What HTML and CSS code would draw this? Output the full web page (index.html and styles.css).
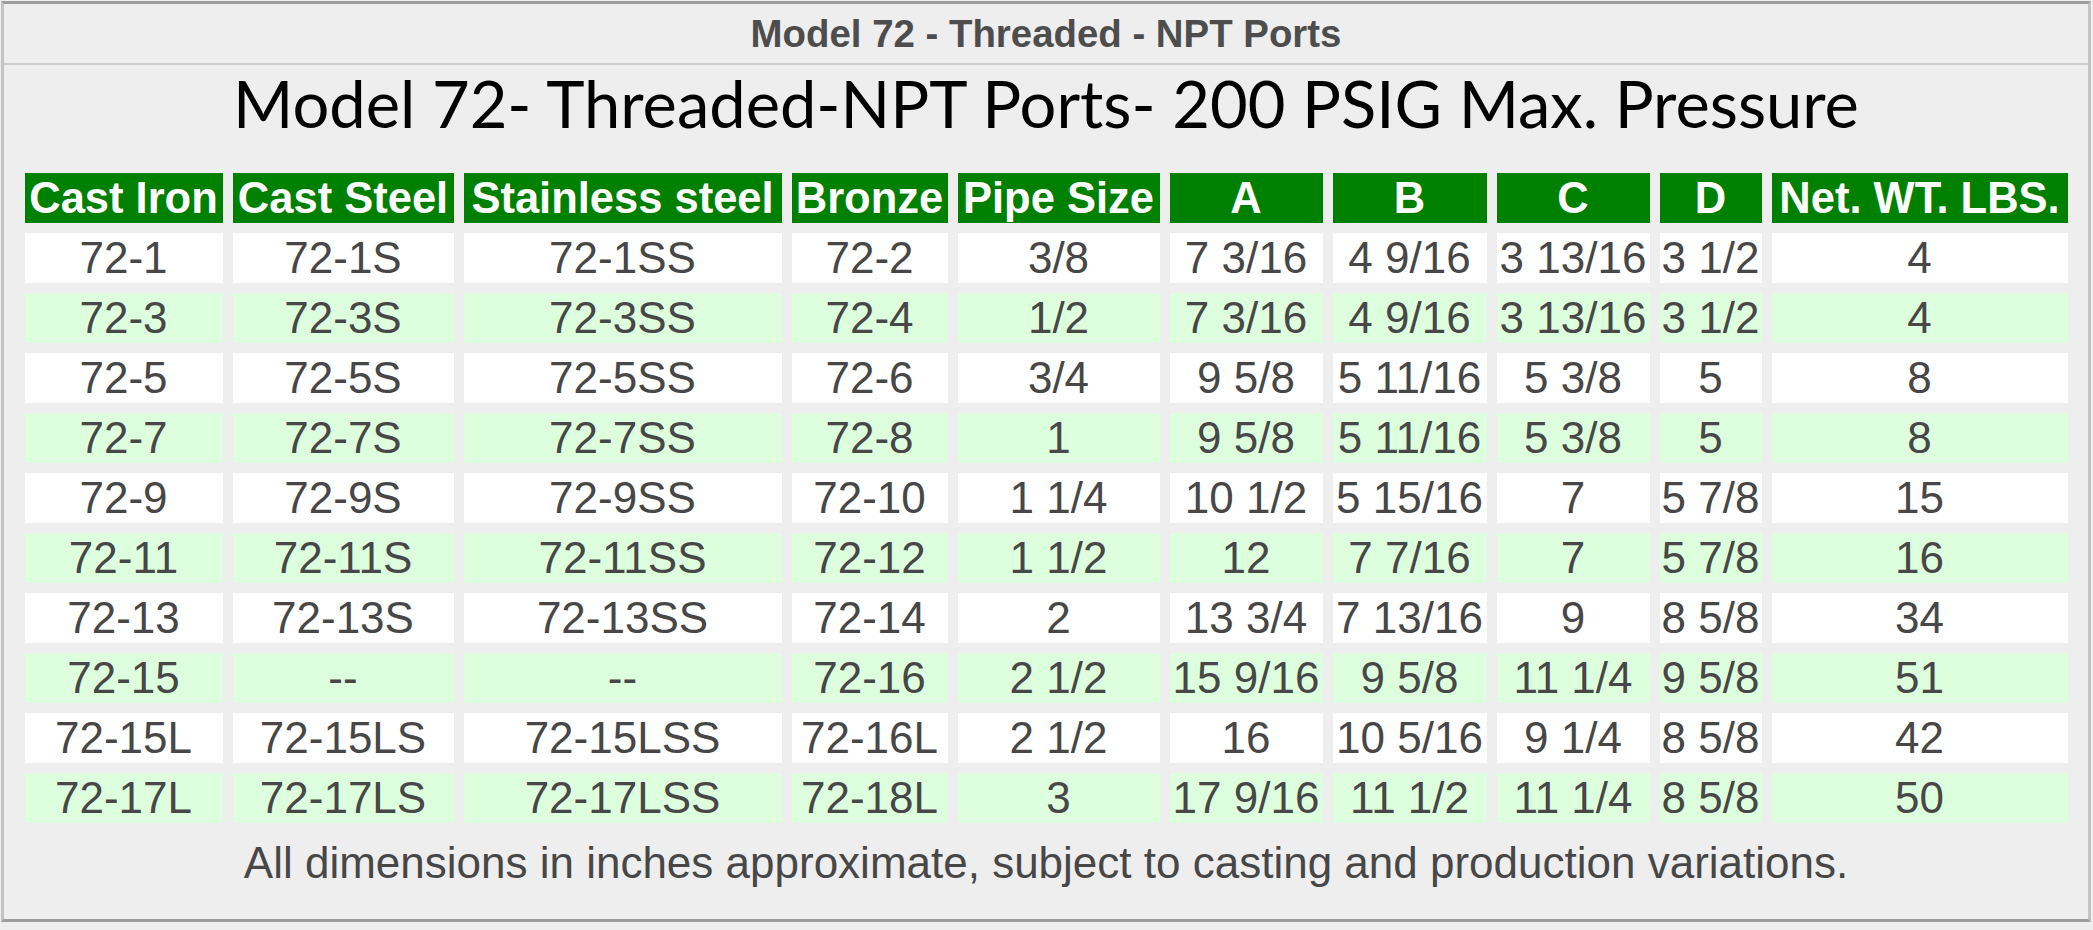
FILE: index.html
```html
<!DOCTYPE html>
<html>
<head>
<meta charset="utf-8">
<link rel="stylesheet" href="styles.css">
</head>
<body>
<div class="panel">
  <div class="panel-head">Model 72 - Threaded - NPT Ports</div>
  <h1 class="title">Model 72- Threaded-NPT Ports- 200 PSIG Max. Pressure</h1>
  <table class="spec">
    <colgroup>
      <col class="c-iron"><col class="c-steel"><col class="c-ss"><col class="c-bronze"><col class="c-pipe">
      <col class="c-a"><col class="c-b"><col class="c-c"><col class="c-d"><col class="c-wt">
    </colgroup>
    <thead>
      <tr><th>Cast Iron</th><th>Cast Steel</th><th>Stainless steel</th><th>Bronze</th><th>Pipe Size</th><th>A</th><th>B</th><th>C</th><th>D</th><th>Net. WT. LBS.</th></tr>
    </thead>
    <tbody>
      <tr><td>72-1</td><td>72-1S</td><td>72-1SS</td><td>72-2</td><td>3/8</td><td>7 3/16</td><td>4 9/16</td><td>3 13/16</td><td>3 1/2</td><td>4</td></tr>
      <tr><td>72-3</td><td>72-3S</td><td>72-3SS</td><td>72-4</td><td>1/2</td><td>7 3/16</td><td>4 9/16</td><td>3 13/16</td><td>3 1/2</td><td>4</td></tr>
      <tr><td>72-5</td><td>72-5S</td><td>72-5SS</td><td>72-6</td><td>3/4</td><td>9 5/8</td><td>5 11/16</td><td>5 3/8</td><td>5</td><td>8</td></tr>
      <tr><td>72-7</td><td>72-7S</td><td>72-7SS</td><td>72-8</td><td>1</td><td>9 5/8</td><td>5 11/16</td><td>5 3/8</td><td>5</td><td>8</td></tr>
      <tr><td>72-9</td><td>72-9S</td><td>72-9SS</td><td>72-10</td><td>1 1/4</td><td>10 1/2</td><td>5 15/16</td><td>7</td><td>5 7/8</td><td>15</td></tr>
      <tr><td>72-11</td><td>72-11S</td><td>72-11SS</td><td>72-12</td><td>1 1/2</td><td>12</td><td>7 7/16</td><td>7</td><td>5 7/8</td><td>16</td></tr>
      <tr><td>72-13</td><td>72-13S</td><td>72-13SS</td><td>72-14</td><td>2</td><td>13 3/4</td><td>7 13/16</td><td>9</td><td>8 5/8</td><td>34</td></tr>
      <tr><td>72-15</td><td>--</td><td>--</td><td>72-16</td><td>2 1/2</td><td>15 9/16</td><td>9 5/8</td><td>11 1/4</td><td>9 5/8</td><td>51</td></tr>
      <tr><td>72-15L</td><td>72-15LS</td><td>72-15LSS</td><td>72-16L</td><td>2 1/2</td><td>16</td><td>10 5/16</td><td>9 1/4</td><td>8 5/8</td><td>42</td></tr>
      <tr><td>72-17L</td><td>72-17LS</td><td>72-17LSS</td><td>72-18L</td><td>3</td><td>17 9/16</td><td>11 1/2</td><td>11 1/4</td><td>8 5/8</td><td>50</td></tr>
    </tbody>
  </table>
  <p class="note">All dimensions in inches approximate, subject to casting and production variations.</p>
</div>
</body>
</html>
```
FILE: styles.css
```css
html, body {
  margin: 0;
  padding: 0;
  background: #eeeeee;
}
body {
  padding: 1px 2px 2px 1px;
}
.panel {
  background: #eeeeee;
  border: 3px solid #c4c4c4;
  border-top-color: #9c9c9c;
  border-bottom-color: #9c9c9c;
  height: 921px;
  box-sizing: border-box;
  font-family: "Liberation Sans", Arial, sans-serif;
}
.panel-head {
  height: 59px;
  line-height: 59px;
  text-align: center;
  font-weight: bold;
  font-size: 38.4px;
  color: #4d4d4d;
  border-bottom: 2px solid #cccccc;
}
.title {
  margin: 6px 0 27px;
  font-family: Lato, "Open Sans", sans-serif;
  font-weight: normal;
  font-size: 65px;
  line-height: 65px;
  color: #000;
  text-align: center;
}
.spec {
  margin: 0 auto;
  border-collapse: separate;
  border-spacing: 10px;
  table-layout: fixed;
  width: 2063px;
}
.c-iron { width: 198px; }
.c-steel { width: 221px; }
.c-ss { width: 318px; }
.c-bronze { width: 156px; }
.c-pipe { width: 202px; }
.c-a { width: 153px; }
.c-b { width: 154px; }
.c-c { width: 153px; }
.c-d { width: 102px; }
.c-wt { width: 296px; }
.spec th, .spec td {
  padding: 0;
  text-align: center;
  white-space: nowrap;
  overflow: visible;
}
.spec th {
  background: #008000;
  color: #ffffff;
  font-weight: bold;
  font-size: 43.5px;
  height: 50px;
  line-height: 50px;
}
.spec td {
  background: #ffffff;
  color: #474747;
  font-size: 44px;
  height: 50px;
  line-height: 50px;
}
.spec tbody tr:nth-child(even) td {
  background: #ddffdd;
}
.note {
  margin: 6px 0 0;
  text-align: center;
  font-size: 44px;
  line-height: 48px;
  color: #474747;
}
```
